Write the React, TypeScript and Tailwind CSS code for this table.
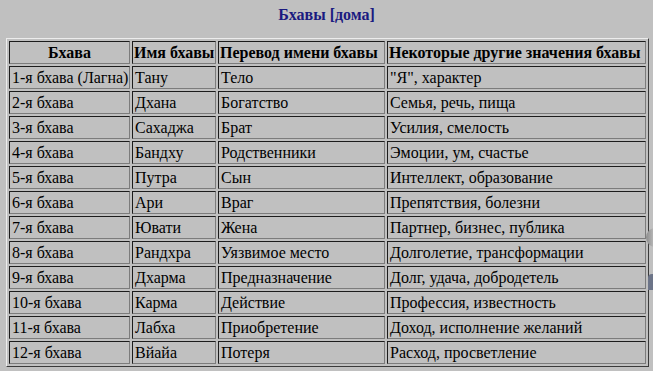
const rows: [string, string, string, string][] = [
  ['1-я бхава (Лагна)', 'Тану', 'Тело', '"Я", характер'],
  ['2-я бхава', 'Дхана', 'Богатство', 'Семья, речь, пища'],
  ['3-я бхава', 'Сахаджа', 'Брат', 'Усилия, смелость'],
  ['4-я бхава', 'Бандху', 'Родственники', 'Эмоции, ум, счастье'],
  ['5-я бхава', 'Путра', 'Сын', 'Интеллект, образование'],
  ['6-я бхава', 'Ари', 'Враг', 'Препятствия, болезни'],
  ['7-я бхава', 'Ювати', 'Жена', 'Партнер, бизнес, публика'],
  ['8-я бхава', 'Рандхра', 'Уязвимое место', 'Долголетие, трансформации'],
  ['9-я бхава', 'Дхарма', 'Предназначение', 'Долг, удача, добродетель'],
  ['10-я бхава', 'Карма', 'Действие', 'Профессия, известность'],
  ['11-я бхава', 'Лабха', 'Приобретение', 'Доход, исполнение желаний'],
  ['12-я бхава', 'Вйайа', 'Потеря', 'Расход, просветление'],
];

const headers = ['Бхава', 'Имя бхавы', 'Перевод имени бхавы', 'Некоторые другие значения бхавы'];

const cell =
  'h-[23px] flex items-center overflow-hidden whitespace-nowrap border border-t-[#1c1c1c] border-l-[#1c1c1c] border-b-[#7c7c7c] border-r-[#7c7c7c]';

export default function App() {
  return (
    <div className="relative w-[653px] h-[371px] overflow-hidden bg-[#c0c0c0] text-black [font-family:'Liberation_Serif',serif]">
      <h1 className="pt-[3px] h-[38px] text-center text-[16px] font-bold text-[#1a1a80]">Бхавы [дома]</h1>

      <div className="ml-[6px] w-[643px] border border-t-[#ececec] border-l-[#ececec] border-b-[#3a3a3a] border-r-[#3a3a3a] p-[2px] grid grid-cols-[121px_84px_167px_259px] gap-[2px] text-[16px] leading-none">
        {headers.map((h, i) => (
          <div key={h} className={`${cell} font-bold px-[1px] ${i === 0 ? 'justify-center' : ''}`}>
            {h}
          </div>
        ))}
        {rows.map((r) =>
          r.map((c, i) => (
            <div key={r[0] + i} className={`${cell} px-[2px]`}>
              {c}
            </div>
          )),
        )}
      </div>

      {/* stray scroll widget peeking in at the right edge */}
      <div className="absolute left-[646px] top-[228px] w-[12px] h-[19px] rounded-l-full bg-gradient-to-r from-[#8c8c8c] to-[#d4d4d4]" />
      <div className="absolute left-[648px] top-[274px] w-[8px] h-[16px] rounded-tl-[4px] bg-[#6c7488]" />
    </div>
  );
}
